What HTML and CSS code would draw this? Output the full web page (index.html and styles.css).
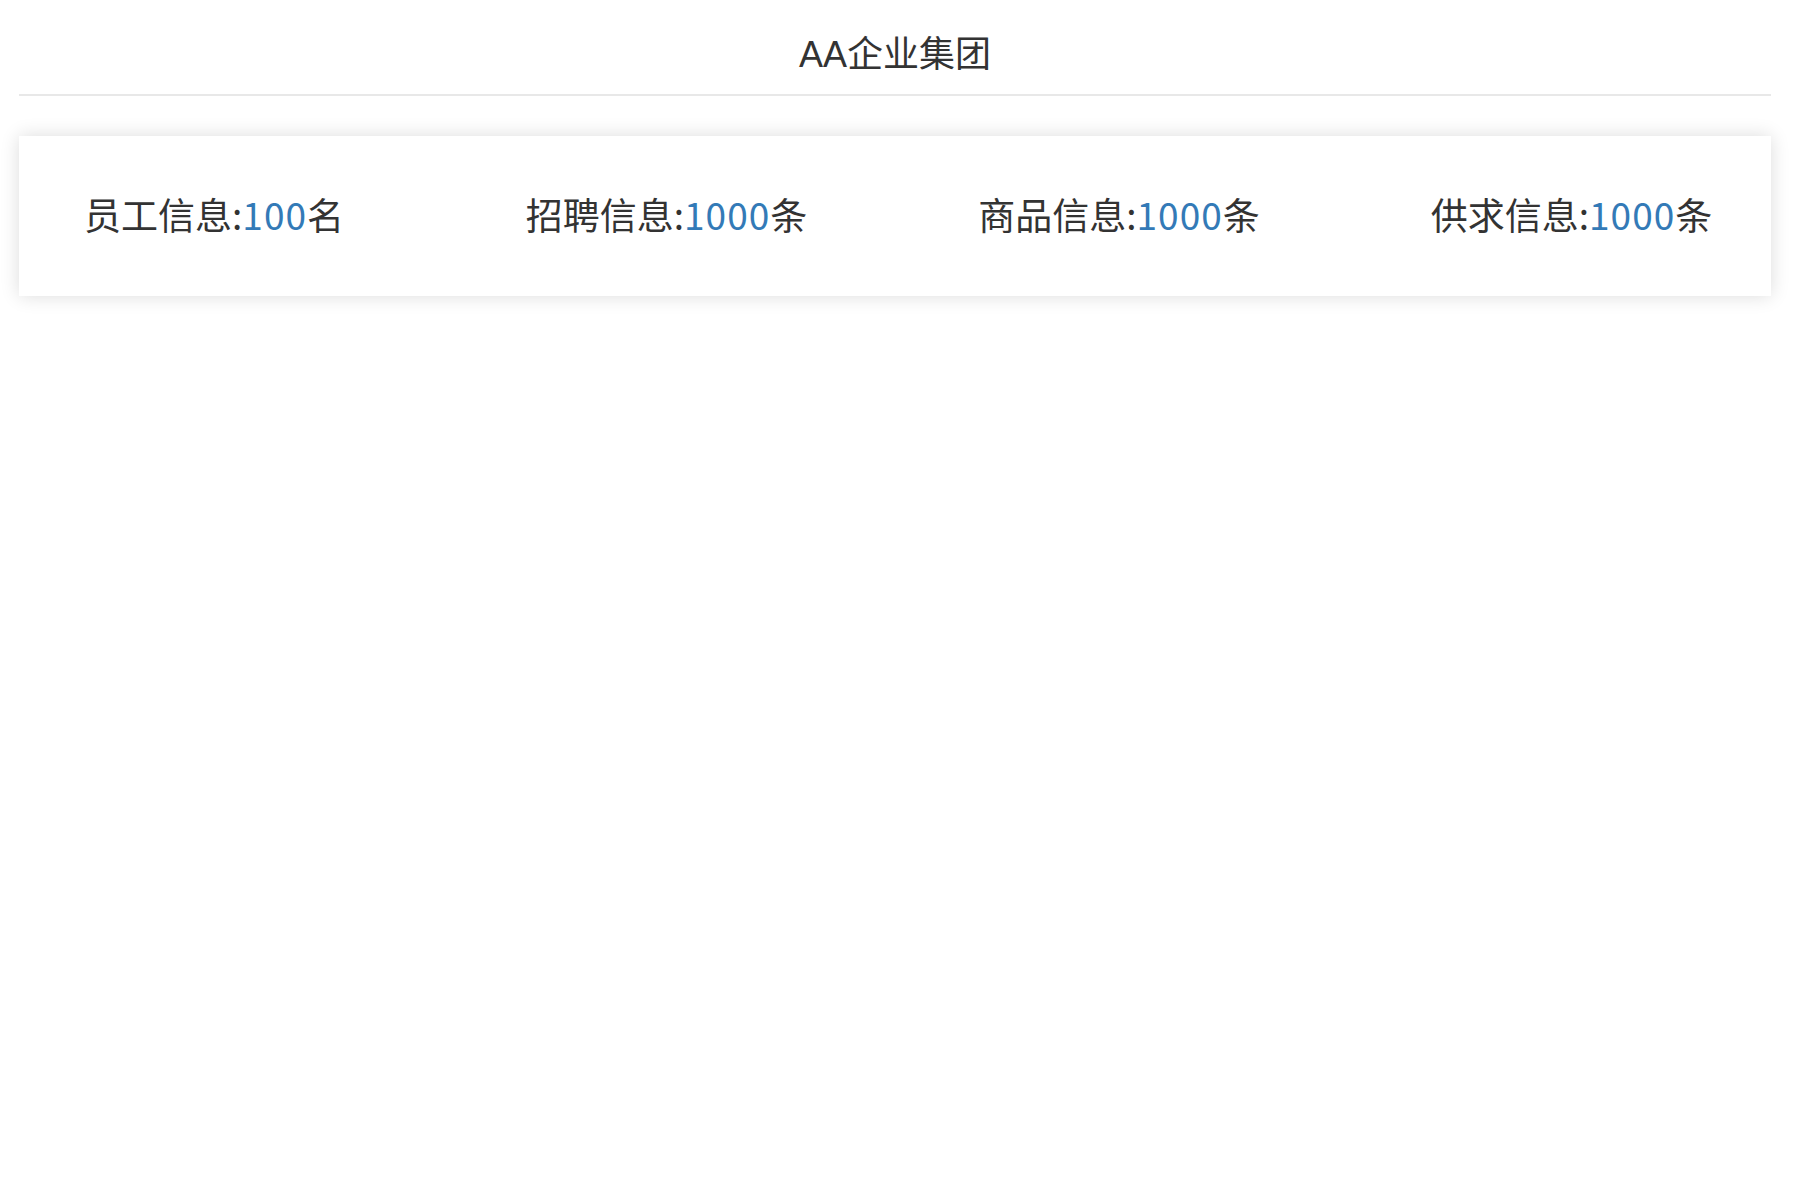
FILE: index.html
```html
<!DOCTYPE html>
<html lang="zh-CN">
<head>
<meta charset="utf-8">
<title>AA企业集团</title>
<link rel="stylesheet" href="styles.css">
</head>
<body>
<div class="page">
  <header class="header">
    <h1 class="title">AA企业集团</h1>
  </header>
  <section class="stats">
    <div class="stat">员工信息:<span class="num">100</span>名</div>
    <div class="stat">招聘信息:<span class="num">1000</span>条</div>
    <div class="stat">商品信息:<span class="num">1000</span>条</div>
    <div class="stat">供求信息:<span class="num">1000</span>条</div>
  </section>
</div>
</body>
</html>
```
FILE: styles.css
```css
html, body {
  margin: 0;
  padding: 0;
  background: #fff;
}
body {
  color: #333;
  font-family: "Noto Sans CJK SC", sans-serif;
  min-height: 100vh;
}
.page {
  padding: 0 23px 40px 19px;
}
.header {
  height: 94px;
  border-bottom: 2px solid #e8e8e8;
  display: flex;
  align-items: center;
  justify-content: center;
}
.title {
  margin: 0;
  font-family: "Liberation Sans", "Noto Sans CJK SC", sans-serif;
  font-size: 36px;
  line-height: 1;
  font-weight: normal;
  color: #333;
  padding-top: 16px;
}
.stats {
  margin-top: 40px;
  height: 160px;
  background: #fff;
  box-shadow: 0 0 18px rgba(0, 0, 0, 0.14);
  display: grid;
  grid-template-columns: repeat(4, 300px);
  column-gap: 152.5px;
  align-items: center;
  padding: 0 0 4px 45px;
  box-sizing: border-box;
}
.stat {
  text-align: center;
  font-size: 37px;
  line-height: 1;
  white-space: nowrap;
}
.num {
  color: #337ab7;
  letter-spacing: 1px;
}
```
